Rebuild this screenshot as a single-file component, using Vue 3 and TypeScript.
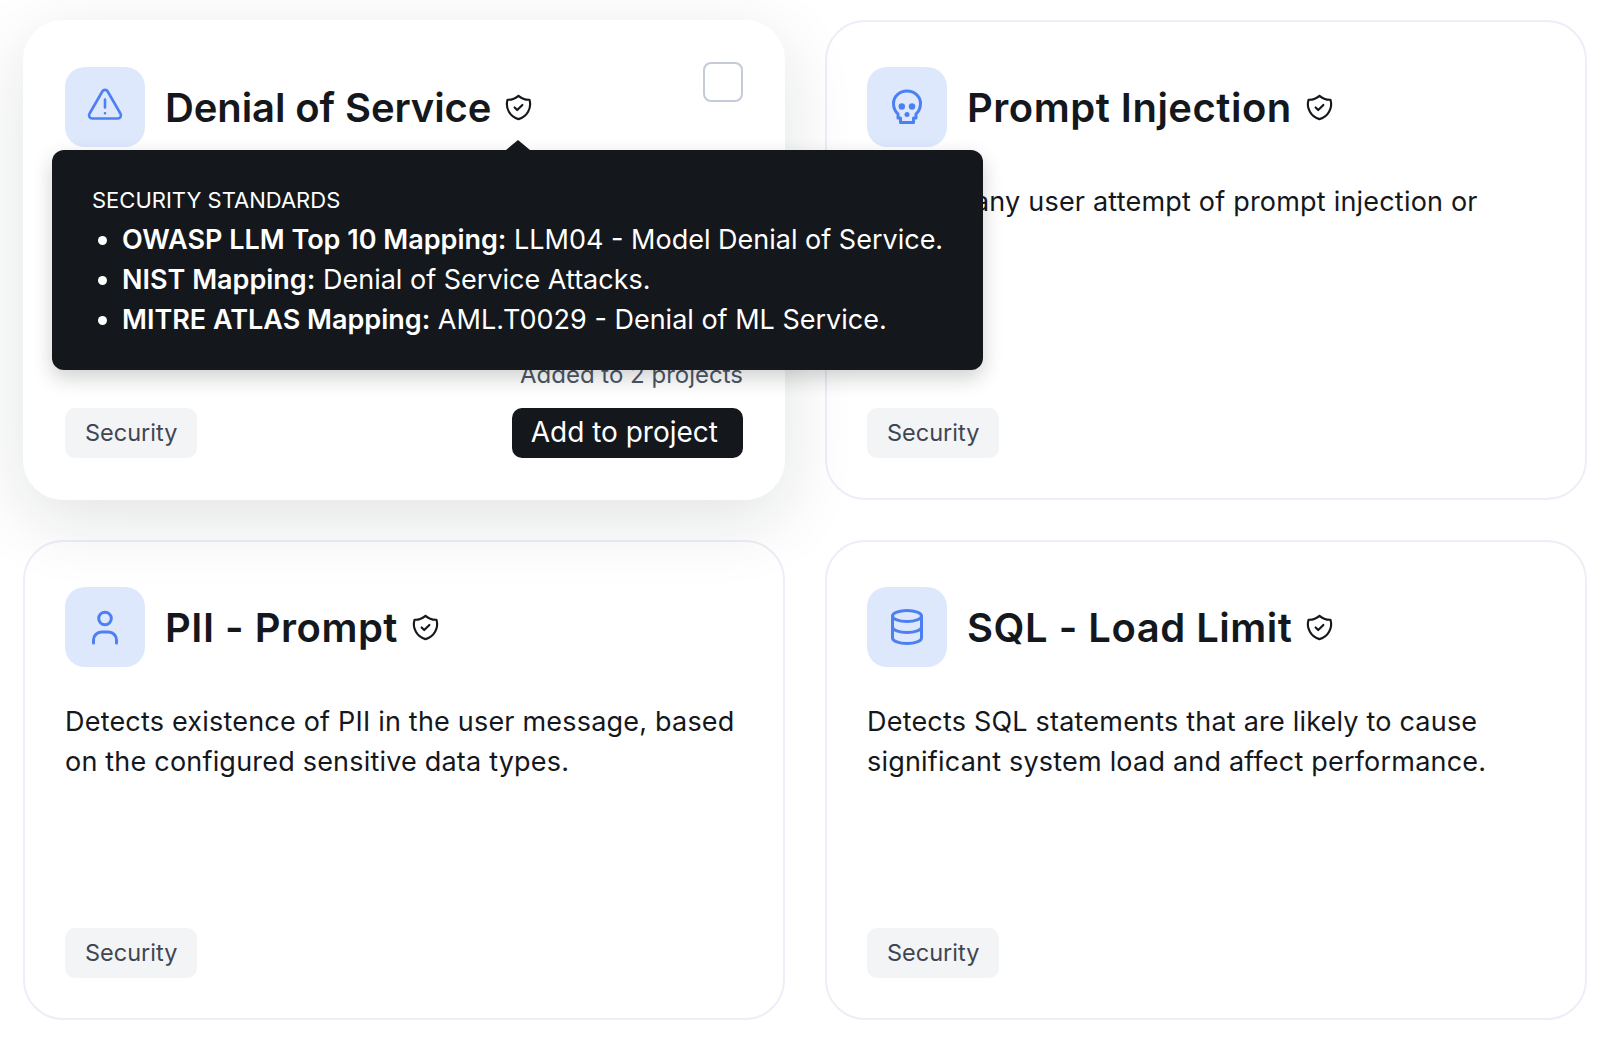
<script setup lang="ts">
interface Card {
  title: string
  desc: string
  icon: 'alert' | 'skull' | 'user' | 'db'
  active?: boolean
}

const cards: Card[] = [
  { title: 'Denial of Service', desc: 'Detects attempts to overload the model with excessive or resource-heavy requests.', icon: 'alert', active: true },
  { title: 'Prompt Injection', desc: 'Detects any user attempt of prompt injection or jailbreak.', icon: 'skull' },
  { title: 'PII - Prompt', desc: 'Detects existence of PII in the user message, based on the configured sensitive data types.', icon: 'user' },
  { title: 'SQL - Load Limit', desc: 'Detects SQL statements that are likely to cause significant system load and affect performance.', icon: 'db' },
]

const standards = [
  { name: 'OWASP LLM Top 10 Mapping:', text: 'LLM04 - Model Denial of Service.' },
  { name: 'NIST Mapping:', text: 'Denial of Service Attacks.' },
  { name: 'MITRE ATLAS Mapping:', text: 'AML.T0029 - Denial of ML Service.' },
]
</script>

<template>
  <main class="grid">
    <article v-for="card in cards" :key="card.title" class="card" :class="{ active: card.active }">
      <header class="head">
        <div class="icon">
          <svg viewBox="0 0 40 40" width="40" height="40" fill="none" stroke="#4c80f1" stroke-width="2.6" stroke-linecap="round" stroke-linejoin="round">
            <template v-if="card.icon === 'alert'">
              <path d="M17.3 4.5 4.6 26.5a3.2 3.2 0 0 0 2.7 5h25.4a3.2 3.2 0 0 0 2.7-5L22.7 4.5a3.1 3.1 0 0 0-5.4 0z" />
              <path d="M20 12.5v8M20 26.2v.1" />
            </template>
            <template v-else-if="card.icon === 'skull'">
              <path stroke-width="3" d="M20 4C12.5 4 6.5 9.6 6.5 16.5c0 4.4 2 8.2 4.5 10.5v4h2.5v4.5h13V31H29v-4c2.5-2.3 4.5-6.1 4.5-10.5C33.5 9.6 27.5 4 20 4z" />
              <circle cx="14.8" cy="19.5" r="3.2" fill="#4c80f1" stroke="none" />
              <circle cx="25" cy="19.5" r="3.2" fill="#4c80f1" stroke="none" />
              <circle cx="20" cy="27.5" r="2.5" fill="#4c80f1" stroke="none" />
            </template>
            <template v-else-if="card.icon === 'user'">
              <circle cx="20" cy="11.5" r="6.3" stroke-width="3" />
              <path stroke-width="3" d="M8.5 36v-3a8 8 0 0 1 8-8h7a8 8 0 0 1 8 8v3" />
            </template>
            <template v-else>
              <ellipse cx="20" cy="9" rx="14.5" ry="5.5" stroke-width="3" />
              <path stroke-width="3" d="M5.5 9v22c0 3 6.5 5.5 14.5 5.5S34.5 34 34.5 31V9" />
              <path stroke-width="3" d="M5.5 20c0 3 6.5 5.5 14.5 5.5S34.5 23 34.5 20" />
            </template>
          </svg>
        </div>
        <h2 class="title">{{ card.title }}</h2>
        <svg class="shield" viewBox="0 0 24 24" width="31" height="31" fill="none" stroke="#14171b" stroke-width="1.65" stroke-linecap="round" stroke-linejoin="round">
          <path d="M12 3a12 12 0 0 0 8.5 3a12 12 0 0 1-8.5 15a12 12 0 0 1-8.5-15a12 12 0 0 0 8.5-3" />
          <path d="M9 12l2 2l4-4" />
        </svg>
      </header>
      <p class="desc">{{ card.desc }}</p>
      <div v-if="card.active" class="added">Added to 2 projects</div>
      <footer class="foot">
        <span class="tag">Security</span>
        <button v-if="card.active" class="btn" type="button">Add to project</button>
      </footer>
      <template v-if="card.active">
        <span class="check"></span>
        <aside class="tip">
          <span class="arrow"></span>
          <div class="tip-title">SECURITY STANDARDS</div>
          <ul class="tip-list">
            <li v-for="s in standards" :key="s.name"><strong>{{ s.name }}</strong> {{ s.text }}</li>
          </ul>
        </aside>
      </template>
    </article>
  </main>
</template>

<style scoped>
.grid {
  display: grid;
  grid-template-columns: 762px 762px;
  grid-auto-rows: 480px;
  gap: 40px;
  padding: 20px 0 0 23px;
  font-family: Inter, "Noto Sans", sans-serif;
  color: #14171b;
}
.card {
  position: relative;
  box-sizing: border-box;
  display: flex;
  flex-direction: column;
  padding: 45px 40px 40px;
  border: 2px solid #eceef8;
  border-radius: 40px;
  background: #fff;
}
.card.active {
  border-color: #fff;
  box-shadow: 0 20px 72px rgba(20, 23, 27, 0.12);
  z-index: 1;
}
.head {
  display: flex;
  align-items: center;
}
.icon {
  flex: none;
  display: flex;
  align-items: center;
  justify-content: center;
  width: 80px;
  height: 80px;
  border-radius: 20px;
  background: #dde8fc;
}
.title {
  margin: 0 12px 0 20px;
  padding-top: 2px;
  font-size: 40px;
  line-height: 48px;
  font-weight: 600;
  letter-spacing: 0.5px;
}
.active .title {
  letter-spacing: -0.1px;
}
.shield {
  flex: none;
}
.desc {
  margin: 35px 0 0;
  font-size: 27px;
  line-height: 40px;
  letter-spacing: 0.2px;
  color: #14171b;
}
.added {
  margin-top: auto;
  text-align: right;
  font-size: 24px;
  line-height: 30px;
  color: #4b5563;
}
.foot {
  display: flex;
  align-items: center;
  justify-content: space-between;
  margin-top: auto;
}
.added + .foot {
  margin-top: 18px;
}
.tag {
  display: flex;
  align-items: center;
  height: 50px;
  padding: 0 20px 2px;
  box-sizing: border-box;
  border-radius: 10px;
  background: #f3f4f6;
  font-size: 23.5px;
  color: #3f4652;
}
.btn {
  height: 50px;
  padding: 0 25px 2px 19px;
  border: 0;
  border-radius: 10px;
  background: #14171b;
  color: #fff;
  font: inherit;
  font-size: 28px;
}
.check {
  position: absolute;
  top: 40px;
  right: 40px;
  box-sizing: border-box;
  width: 40px;
  height: 40px;
  border: 2px solid #c5cad9;
  border-radius: 8px;
  background: #fff;
}
.tip {
  position: absolute;
  top: 128px;
  left: 27px;
  box-sizing: border-box;
  width: 931px;
  height: 220px;
  padding: 30px 20px 30px 40px;
  border-radius: 12px;
  background: #14171b;
  color: #fff;
  box-shadow: 0 8px 20px rgba(20, 23, 27, 0.2);
  font-size: 27px;
  line-height: 40px;
}
.arrow {
  position: absolute;
  top: -10px;
  left: 454px;
  width: 0;
  height: 0;
  border-left: 12px solid transparent;
  border-right: 12px solid transparent;
  border-bottom: 10px solid #14171b;
}
.tip-title {
  font-size: 22px;
}
.tip-list {
  margin: 0;
  padding: 0 0 0 30px;
}
.tip-list strong {
  font-weight: 600;
}
</style>

<style>
body {
  background: #fff;
}
</style>
